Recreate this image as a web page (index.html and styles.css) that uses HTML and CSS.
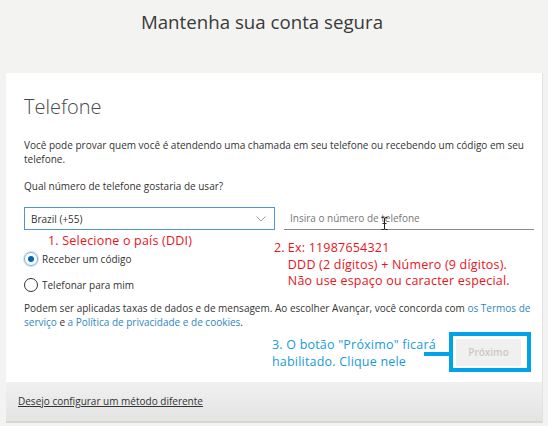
FILE: index.html
```html
<!DOCTYPE html>
<html lang="pt-BR">
<head>
    <meta charset="UTF-8">
    <meta name="viewport" content="width=device-width, initial-scale=1.0">
    <title>Mantenha sua conta segura</title>
    <link rel="stylesheet" href="styles.css">
</head>
<body>
    <h1 class="page-title">Mantenha sua conta segura</h1>

    <div class="card">
        <div class="card-body">
            <h2 class="section-title">Telefone</h2>
            <p class="intro">Você pode provar quem você é atendendo uma chamada em seu telefone ou recebendo um código em seu telefone.</p>
            <p class="question">Qual número de telefone gostaria de usar?</p>

            <div class="phone-grid">
                <div class="col-left">
                    <div class="select-box">
                        <span>Brazil (+55)</span>
                        <svg class="chevron" width="10" height="6" viewBox="0 0 10 6"><path d="M0.5 0.5 L5 5 L9.5 0.5" fill="none" stroke="#a0a0a0" stroke-width="1"/></svg>
                    </div>
                    <div class="note red step1">1. Selecione o país (DDI)</div>
                    <label class="radio-row">
                        <span class="radio checked"></span>
                        Receber um código
                    </label>
                    <label class="radio-row">
                        <span class="radio"></span>
                        Telefonar para mim
                    </label>
                </div>
                <div class="col-right">
                    <div class="phone-input">
                        <span class="placeholder">Insira o número de telefone</span>
                        <svg class="ibeam" width="7" height="13" viewBox="0 0 7 13"><path d="M0.5 0.5 H2.5 Q3.5 0.5 3.5 2 V11 Q3.5 12.5 2.5 12.5 H0.5 M6.5 0.5 H4.5 Q3.5 0.5 3.5 2 M3.5 11 Q3.5 12.5 4.5 12.5 H6.5 M1.5 6.5 H5.5" fill="none" stroke="#222" stroke-width="1"/></svg>
                    </div>
                    <div class="note red step2">
                        <span class="num">2.</span>
                        <span>Ex: 11987654321<br>DDD (2 dígitos) + Número (9 dígitos).<br>Não use espaço ou caracter especial.</span>
                    </div>
                </div>
            </div>

            <p class="terms">Podem ser aplicadas taxas de dados e de mensagem. Ao escolher Avançar, você concorda com <a href="#">os Termos de serviço</a> e <a href="#">a Política de privacidade e de cookies</a>.</p>

            <div class="next-row">
                <div class="note blue step3">3. O botão "Próximo" ficará<br>habilitado. Clique nele</div>
                <div class="highlight">
                    <span class="connector"></span>
                    <button class="next-btn" disabled>Próximo</button>
                </div>
            </div>
        </div>
        <div class="card-footer">
            <a href="#" class="other-method">Desejo configurar um método diferente</a>
        </div>
    </div>
</body>
</html>
```

FILE: styles.css
```css
body {
    margin: 0;
    background-color: #f3f3f1;
    font-family: 'Open Sans', sans-serif;
    color: #333;
    height: 426px;
    overflow: hidden;
}
.page-title {
    margin: 0;
    height: 73px;
    padding: 8px 24px 0 0;
    box-sizing: border-box;
    text-align: center;
    font-size: 18.7px;
    font-weight: 400;
    color: #3a3a3a;
    line-height: 28px;
}
.card {
    margin: 0 5px 0 6px;
    background: #ffffff;
    border-right: 1px solid #e2e2e2;
}
.card-body {
    padding: 21px 10px 10px 18px;
}
.section-title {
    margin: 0;
    font-size: 20px;
    font-weight: 300;
    color: #4a4a4a;
    line-height: 26px;
}
.intro {
    margin: 18px 0 0;
    font-size: 10px;
    line-height: 14px;
    color: #333;
}
.question {
    margin: 13px 0 0;
    font-size: 10px;
    line-height: 14px;
}
.phone-grid {
    display: grid;
    grid-template-columns: 251px 250px;
    column-gap: 9px;
    margin-top: 14px;
}
.select-box {
    height: 23px;
    border: 1px solid #4f94d6;
    box-sizing: border-box;
    display: flex;
    align-items: center;
    justify-content: space-between;
    padding: 0 8px 0 6px;
    font-size: 10px;
    color: #333;
}
.note {
    font-size: 12.5px;
    line-height: 16.5px;
    letter-spacing: 0.2px;
    white-space: nowrap;
}
.red {
    color: #e8141c;
}
.blue {
    color: #1a9ad8;
}
.step1 {
    margin: 3px 0 0 24px;
}
.radio-row {
    display: flex;
    align-items: center;
    gap: 4px;
    height: 16px;
    font-size: 10px;
    color: #333;
    margin-top: 1px;
}
.radio-row + .radio-row {
    margin-top: 10px;
}
.radio {
    width: 14px;
    height: 14px;
    border: 1px solid #333;
    border-radius: 50%;
    box-sizing: border-box;
    position: relative;
}
.radio.checked {
    border-color: #7ab0e0;
    box-shadow: 0 0 0 1px #cfe3f5;
}
.radio.checked::after {
    content: "";
    position: absolute;
    left: 3px;
    top: 3px;
    width: 6px;
    height: 6px;
    border-radius: 50%;
    background: #0067b8;
}
.phone-input {
    height: 23px;
    border-bottom: 1px solid #8a8a8a;
    box-sizing: border-box;
    display: flex;
    align-items: center;
    padding-left: 6px;
    position: relative;
}
.placeholder {
    font-size: 10px;
    color: #777;
}
.ibeam {
    position: absolute;
    left: 97px;
    top: 10px;
}
.step2 {
    display: flex;
    gap: 3px;
    margin: 10px 0 0 -10px;
}
.terms {
    margin: 8px 0 0;
    font-size: 10px;
    line-height: 14px;
    color: #333;
}
.terms a {
    color: #2f86c4;
    text-decoration: none;
}
.next-row {
    display: flex;
    align-items: center;
    margin-top: 3px;
}
.step3 {
    margin-left: 248px;
    padding-top: 4px;
}
.highlight {
    position: relative;
    margin-left: auto;
    margin-right: 1px;
    border: 4px solid #00a3e8;
    padding: 3px 6px 2px 3px;
}
.connector {
    position: absolute;
    left: -29px;
    top: 16px;
    width: 25px;
    height: 4px;
    background: #00a3e8;
}
.next-btn {
    display: block;
    width: 65px;
    height: 27px;
    border: none;
    background: #f0f0f0;
    color: #c8c8c8;
    font-family: 'Open Sans', sans-serif;
    font-size: 10px;
    font-weight: 600;
}
.card-footer {
    height: 39px;
    background: linear-gradient(#f0f0f0, #e4e4e4);
    border-bottom: 2px solid #d6d6d6;
    display: flex;
    align-items: center;
    padding-left: 12px;
}
.other-method {
    font-size: 10px;
    color: #333;
    text-decoration: underline;
}
```
